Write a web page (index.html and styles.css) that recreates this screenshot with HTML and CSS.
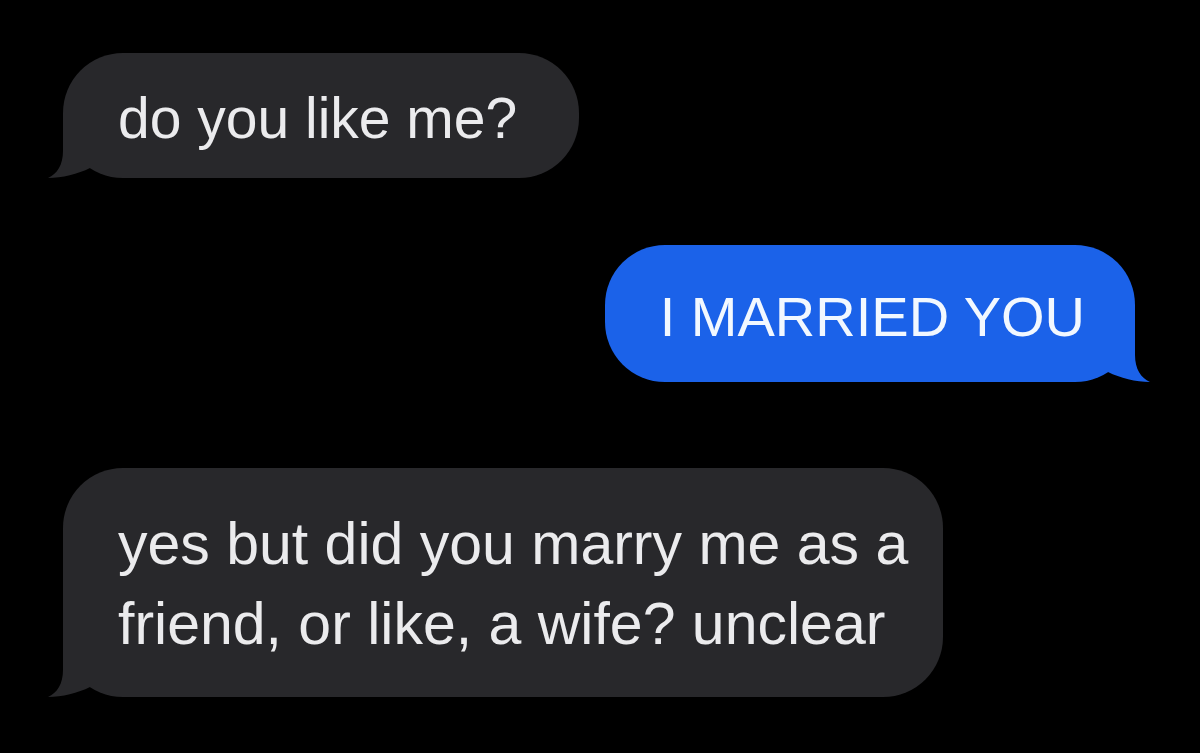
FILE: index.html
```html
<!DOCTYPE html>
<html lang="en">
<head>
  <meta charset="UTF-8" />
  <meta name="viewport" content="width=device-width, initial-scale=1.0" />
  <title>Messages</title>
  <link rel="stylesheet" href="styles.css">
</head>
<body>
  <div class="thread">
    <div class="msg msg-them msg-first">
      <p class="bubble">do you like me?</p>
      <!-- bubble tail -->
      <svg class="tail" viewBox="0 0 45 60" width="45" height="60"><path d="M15,0 L15,33 C15,47 9,56 0,60 C14,60 30,56 42,50 L42,0 Z"/></svg>
    </div>

    <div class="msg msg-me msg-second">
      <p class="bubble">I MARRIED YOU</p>
      <svg class="tail" viewBox="0 0 45 60" width="45" height="60"><path d="M15,0 L15,33 C15,47 9,56 0,60 C14,60 30,56 42,50 L42,0 Z"/></svg>
    </div>

    <div class="msg msg-them msg-third">
      <p class="bubble">yes but did you marry me as a friend, or like, a wife? unclear</p>
      <svg class="tail" viewBox="0 0 45 60" width="45" height="60"><path d="M15,0 L15,33 C15,47 9,56 0,60 C14,60 30,56 42,50 L42,0 Z"/></svg>
    </div>
  </div>
</body>
</html>
```

FILE: styles.css
```css
body {
  background-color: #000;
  font-family: 'Liberation Sans', Arial, sans-serif;
  color: #ebebed;
  margin: 0;
}
.thread {
  display: flex;
  flex-direction: column;
  padding: 53px 65px 0 63px;
}
.msg {
  position: relative;
  display: flex;
}
.msg-them {
  align-self: flex-start;
}
.msg-me {
  align-self: flex-end;
}
.bubble {
  margin: 0;
  box-sizing: border-box;
  border-radius: 60px;
  font-size: 57px;
  line-height: 80px;
  padding: 0 62px 0 55px;
}
.msg-them .bubble {
  background-color: #28282b;
}
.msg-me .bubble {
  background-color: #1b62e9;
  color: #f2f8ff;
  padding: 0 50px 0 55px;
  font-size: 56px;
}
.tail {
  position: absolute;
  bottom: 0;
}
.msg-them .tail {
  left: -15px;
  fill: #28282b;
}
.msg-me .tail {
  right: -15px;
  fill: #1b62e9;
  transform: scaleX(-1);
}
.msg-first .bubble {
  padding-top: 25px;
  padding-bottom: 20px;
}
.msg-second {
  margin-top: 67px;
}
.msg-second .bubble {
  padding-top: 32px;
  padding-bottom: 25px;
}
.msg-third {
  margin-top: 86px;
}
.msg-third .bubble {
  max-width: 880px;
  font-size: 59px;
  padding: 36px 30px 33px 55px;
}
```
